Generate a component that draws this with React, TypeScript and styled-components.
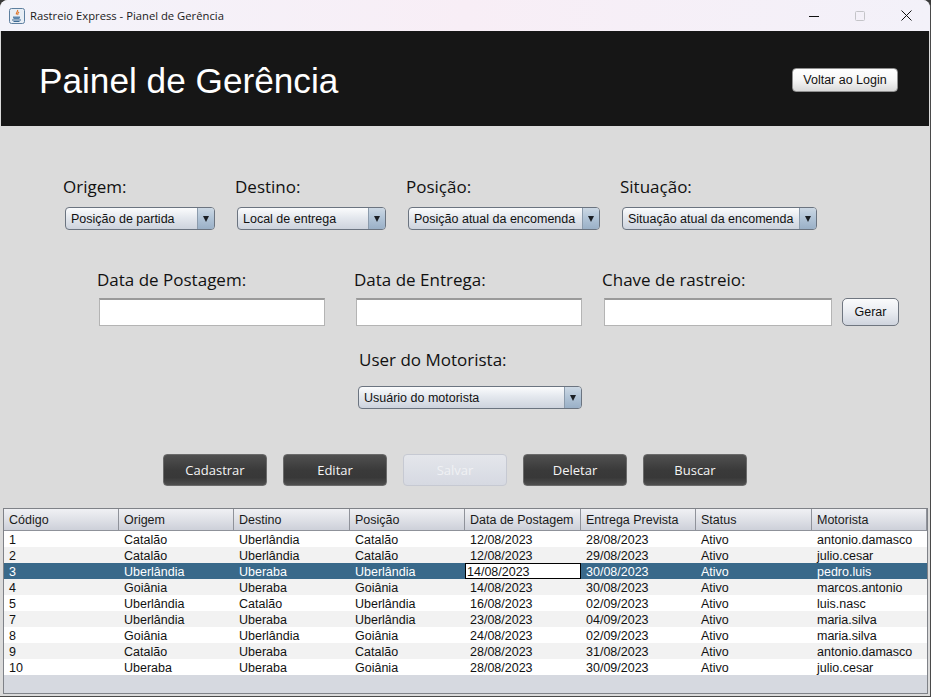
import styled, { createGlobalStyle } from "styled-components";

const GlobalStyle = createGlobalStyle`
  html, body {
    margin: 0;
    padding: 0;
    background: #3a3a3a;
  }
`;

const Frame = styled.div`
  width: 931px;
  height: 697px;
  box-sizing: border-box;
  display: flex;
  flex-direction: column;
  overflow: hidden;
  padding: 0 1px 1px 1px;
  background: #dbdbdb;
  border-radius: 8px 8px 0 0;
  border-right: 1px solid #4a4a4a;
  border-bottom: 1px solid #4a4a4a;
`;

const TitleBar = styled.div`
  height: 31px;
  flex: none;
  margin: 0 -1px;
  display: flex;
  align-items: center;
  padding: 0 1px 0 9px;
  background: linear-gradient(90deg, #f3f3fa 0%, #f8eef6 50%, #f3f1f9 100%);
  font-family: "Open Sans", sans-serif;
  font-size: 11.25px;
  color: #1a1a1a;
`;

const TitleText = styled.span`
  margin-left: 5px;
  flex: 1;
`;

const WindowButton = styled.div`
  width: 46px;
  height: 31px;
  display: flex;
  align-items: center;
  justify-content: center;
`;

const Header = styled.div`
  height: 95px;
  box-sizing: border-box;
  flex: none;
  display: flex;
  align-items: center;
  justify-content: space-between;
  padding: 2px 31px 0 38px;
  background: #161616;
`;

const HeaderTitle = styled.h1`
  margin: 3px 0 0;
  font-family: "Liberation Sans", sans-serif;
  font-size: 35.2px;
  font-weight: 400;
  color: #ffffff;
`;

const LoginButton = styled.button`
  width: 106px;
  height: 24px;
  padding: 0;
  border: 1px solid #8f8f8f;
  border-radius: 4px;
  background: linear-gradient(180deg, #ffffff 0%, #f6f6f6 50%, #d9d9d9 100%);
  font-family: "Liberation Sans", sans-serif;
  font-size: 12.5px;
  color: #111111;
`;

const FormRow = styled.div<{ $top: number; $left: number; $columns: string }>`
  flex: none;
  display: grid;
  grid-template-columns: ${(p) => p.$columns};
  margin-top: ${(p) => p.$top}px;
  padding-left: ${(p) => p.$left}px;
`;

const Field = styled.div<{ $gap: number }>`
  display: flex;
  flex-direction: column;
  gap: ${(p) => p.$gap}px;
`;

const Label = styled.label`
  height: 24px;
  line-height: 24px;
  font-family: "Open Sans", sans-serif;
  font-size: 17px;
  color: #111111;
  white-space: nowrap;
`;

const Combo = styled.div<{ $width: number; $inset?: number }>`
  box-sizing: border-box;
  width: ${(p) => p.$width}px;
  height: 23px;
  margin-left: ${(p) => p.$inset ?? 2}px;
  display: flex;
  align-items: center;
  overflow: hidden;
  border: 1px solid #6b7480;
  border-radius: 4px;
  background: linear-gradient(180deg, #fbfcfd 0%, #e4e8ee 45%, #cdd3dd 100%);
  font-family: "Liberation Sans", sans-serif;
  font-size: 12.5px;
  color: #111111;
`;

const ComboText = styled.span`
  flex: 1;
  padding-left: 5px;
  white-space: nowrap;
`;

const ComboArrow = styled.div`
  width: 16px;
  height: 100%;
  flex: none;
  display: flex;
  align-items: center;
  justify-content: center;
  background: linear-gradient(180deg, #ccd8e4 0%, #b0c3d6 50%, #9ab0c7 100%);
  border-left: 1px solid #8b9bac;

  &::after {
    content: "";
    border-left: 3.5px solid transparent;
    border-right: 3.5px solid transparent;
    border-top: 6px solid #1b1f24;
  }
`;

const TextInput = styled.input<{ $width: number }>`
  box-sizing: border-box;
  width: ${(p) => p.$width}px;
  height: 28px;
  margin-left: 2px;
  border: 1px solid #b4b4b4;
  border-top: 2px solid #9a9a9a;
  background: #ffffff;
  outline: none;
`;

const InputLine = styled.div`
  display: flex;
  gap: 10px;
`;

const GenerateButton = styled.button`
  width: 57px;
  height: 28px;
  padding: 0;
  border: 1px solid #6f7680;
  border-radius: 5px;
  background: linear-gradient(180deg, #fafbfc 0%, #e9ecf1 50%, #cfd4de 100%);
  font-family: "Liberation Sans", sans-serif;
  font-size: 12.5px;
  color: #111111;
`;

const ActionRow = styled.div`
  flex: none;
  display: flex;
  gap: 16px;
  margin-top: 45px;
  padding-left: 162px;
`;

const ActionButton = styled.button<{ $disabled?: boolean }>`
  width: 104px;
  height: 32px;
  padding: 0;
  border-radius: 4px;
  border: 1px solid ${(p) => (p.$disabled ? "#c6c9d2" : "#6a6a6a")};
  background: ${(p) =>
    p.$disabled
      ? "linear-gradient(180deg, #e4e6eb 0%, #d6d9e2 100%)"
      : "linear-gradient(180deg, #505050 0%, #3a3a3a 50%, #383838 75%, #4e4e4e 100%)"};
  color: ${(p) => (p.$disabled ? "#f0f1f4" : "#f4f4f4")};
  font-family: "Open Sans", sans-serif;
  font-size: 13px;
`;

const TableWrap = styled.div`
  flex: 1;
  margin: 22px 1px 1px 2px;
  border: 1px solid #7f8288;
  background: #d6d9e0;
  font-family: "Liberation Sans", sans-serif;
  font-size: 12.5px;
`;

const GridRow = styled.div`
  display: grid;
  grid-template-columns: 115px 115px 116px 115px 116px 115px 116px 1fr;
`;

const HeadCell = styled.div`
  height: 22px;
  line-height: 22px;
  box-sizing: border-box;
  padding-left: 5px;
  border-right: 1px solid #8f929a;
  border-bottom: 1px solid #8f929a;
  background: linear-gradient(180deg, #f0f1f4 0%, #dfe1e7 50%, #cdd0d9 100%);
  color: #1a1a1a;
  white-space: nowrap;
`;

const BodyRow = styled(GridRow)<{ $even: boolean; $selected: boolean }>`
  height: 16px;
  line-height: 18px;
  background: ${(p) =>
    p.$selected ? "#39698a" : p.$even ? "#f2f2f2" : "#ffffff"};
  color: ${(p) => (p.$selected ? "#ffffff" : "#111111")};
`;

const Cell = styled.div`
  height: 16px;
  padding-left: 5px;
  white-space: nowrap;
  overflow: hidden;
`;

const EditorCell = styled.div`
  box-sizing: border-box;
  height: 16px;
  line-height: 16px;
  padding-left: 1px;
  border: 1px solid #000000;
  background: #ffffff;
  color: #111111;
  overflow: hidden;
`;

const columns = [
  "Código",
  "Origem",
  "Destino",
  "Posição",
  "Data de Postagem",
  "Entrega Prevista",
  "Status",
  "Motorista",
];

const rows = [
  ["1", "Catalão", "Uberlândia", "Catalão", "12/08/2023", "28/08/2023", "Ativo", "antonio.damasco"],
  ["2", "Catalão", "Uberlândia", "Catalão", "12/08/2023", "29/08/2023", "Ativo", "julio.cesar"],
  ["3", "Uberlândia", "Uberaba", "Uberlândia", "14/08/2023", "30/08/2023", "Ativo", "pedro.luis"],
  ["4", "Goiânia", "Uberaba", "Goiânia", "14/08/2023", "30/08/2023", "Ativo", "marcos.antonio"],
  ["5", "Uberlândia", "Catalão", "Uberlândia", "16/08/2023", "02/09/2023", "Ativo", "luis.nasc"],
  ["7", "Uberlândia", "Uberaba", "Uberlândia", "23/08/2023", "04/09/2023", "Ativo", "maria.silva"],
  ["8", "Goiânia", "Uberlândia", "Goiânia", "24/08/2023", "02/09/2023", "Ativo", "maria.silva"],
  ["9", "Catalão", "Uberaba", "Catalão", "28/08/2023", "31/08/2023", "Ativo", "antonio.damasco"],
  ["10", "Uberaba", "Uberaba", "Goiânia", "28/08/2023", "30/09/2023", "Ativo", "julio.cesar"],
];

const JavaIcon = () => (
  <svg width="16" height="16" viewBox="0 0 16 16">
    <rect x="0.5" y="0.5" width="15" height="15" rx="2" fill="#e8eef5" stroke="#5d7f9f" />
    <path d="M8.5 2c1 1.5-2 2.5-1 4.5 M10 4c-1 1-2 1.5-1 3" fill="none" stroke="#e0762a" strokeWidth="1.2" />
    <path d="M4 8.5h7v1c0 1-1 1.5-2 1.5H6c-1 0-2-.5-2-1.5z" fill="#5c86ad" />
    <path d="M3 12h9M4.5 13.5h6" stroke="#3e6b94" strokeWidth="1" />
  </svg>
);

const App = () => {
  return (
    <>
      <GlobalStyle />
      <Frame>
        <TitleBar>
          <JavaIcon />
          <TitleText>Rastreio Express - Pianel de Gerência</TitleText>
          <WindowButton>
            <svg width="10" height="10" viewBox="0 0 10 10">
              <path d="M0 5.5h10" stroke="#111" strokeWidth="1" />
            </svg>
          </WindowButton>
          <WindowButton>
            <svg width="10" height="10" viewBox="0 0 10 10">
              <rect x="0.5" y="0.5" width="9" height="9" rx="1" fill="none" stroke="#c4c4c8" />
            </svg>
          </WindowButton>
          <WindowButton>
            <svg width="11" height="11" viewBox="0 0 11 11">
              <path d="M.5.5l10 10M10.5.5l-10 10" stroke="#111" strokeWidth="1" />
            </svg>
          </WindowButton>
        </TitleBar>

        <Header>
          <HeaderTitle>Painel de Gerência</HeaderTitle>
          <LoginButton>Voltar ao Login</LoginButton>
        </Header>

        <FormRow $top={49} $left={62} $columns="172px 171px 214px auto">
          <Field $gap={8}>
            <Label>Origem:</Label>
            <Combo $width={150}>
              <ComboText>Posição de partida</ComboText>
              <ComboArrow />
            </Combo>
          </Field>
          <Field $gap={8}>
            <Label>Destino:</Label>
            <Combo $width={149}>
              <ComboText>Local de entrega</ComboText>
              <ComboArrow />
            </Combo>
          </Field>
          <Field $gap={8}>
            <Label>Posição:</Label>
            <Combo $width={192}>
              <ComboText>Posição atual da encomenda</ComboText>
              <ComboArrow />
            </Combo>
          </Field>
          <Field $gap={8}>
            <Label>Situação:</Label>
            <Combo $width={195}>
              <ComboText>Situação atual da encomenda</ComboText>
              <ComboArrow />
            </Combo>
          </Field>
        </FormRow>

        <FormRow $top={38} $left={96} $columns="257px 248px auto">
          <Field $gap={6}>
            <Label>Data de Postagem:</Label>
            <TextInput $width={226} />
          </Field>
          <Field $gap={6}>
            <Label>Data de Entrega:</Label>
            <TextInput $width={226} />
          </Field>
          <Field $gap={6}>
            <Label>Chave de rastreio:</Label>
            <InputLine>
              <TextInput $width={228} />
              <GenerateButton>Gerar</GenerateButton>
            </InputLine>
          </Field>
        </FormRow>

        <FormRow $top={22} $left={358} $columns="auto">
          <Field $gap={14}>
            <Label>User do Motorista:</Label>
            <Combo $width={224} $inset={-1}>
              <ComboText>Usuário do motorista</ComboText>
              <ComboArrow />
            </Combo>
          </Field>
        </FormRow>

        <ActionRow>
          <ActionButton>Cadastrar</ActionButton>
          <ActionButton>Editar</ActionButton>
          <ActionButton $disabled>Salvar</ActionButton>
          <ActionButton>Deletar</ActionButton>
          <ActionButton>Buscar</ActionButton>
        </ActionRow>

        <TableWrap>
          <GridRow>
            {columns.map((c) => (
              <HeadCell key={c}>{c}</HeadCell>
            ))}
          </GridRow>
          {rows.map((row, i) => (
            <BodyRow key={row[0]} $even={i % 2 === 1} $selected={i === 2}>
              {row.map((value, j) =>
                i === 2 && j === 4 ? (
                  <EditorCell key={j}>{value}</EditorCell>
                ) : (
                  <Cell key={j}>{value}</Cell>
                )
              )}
            </BodyRow>
          ))}
        </TableWrap>
      </Frame>
    </>
  );
};

export default App;
